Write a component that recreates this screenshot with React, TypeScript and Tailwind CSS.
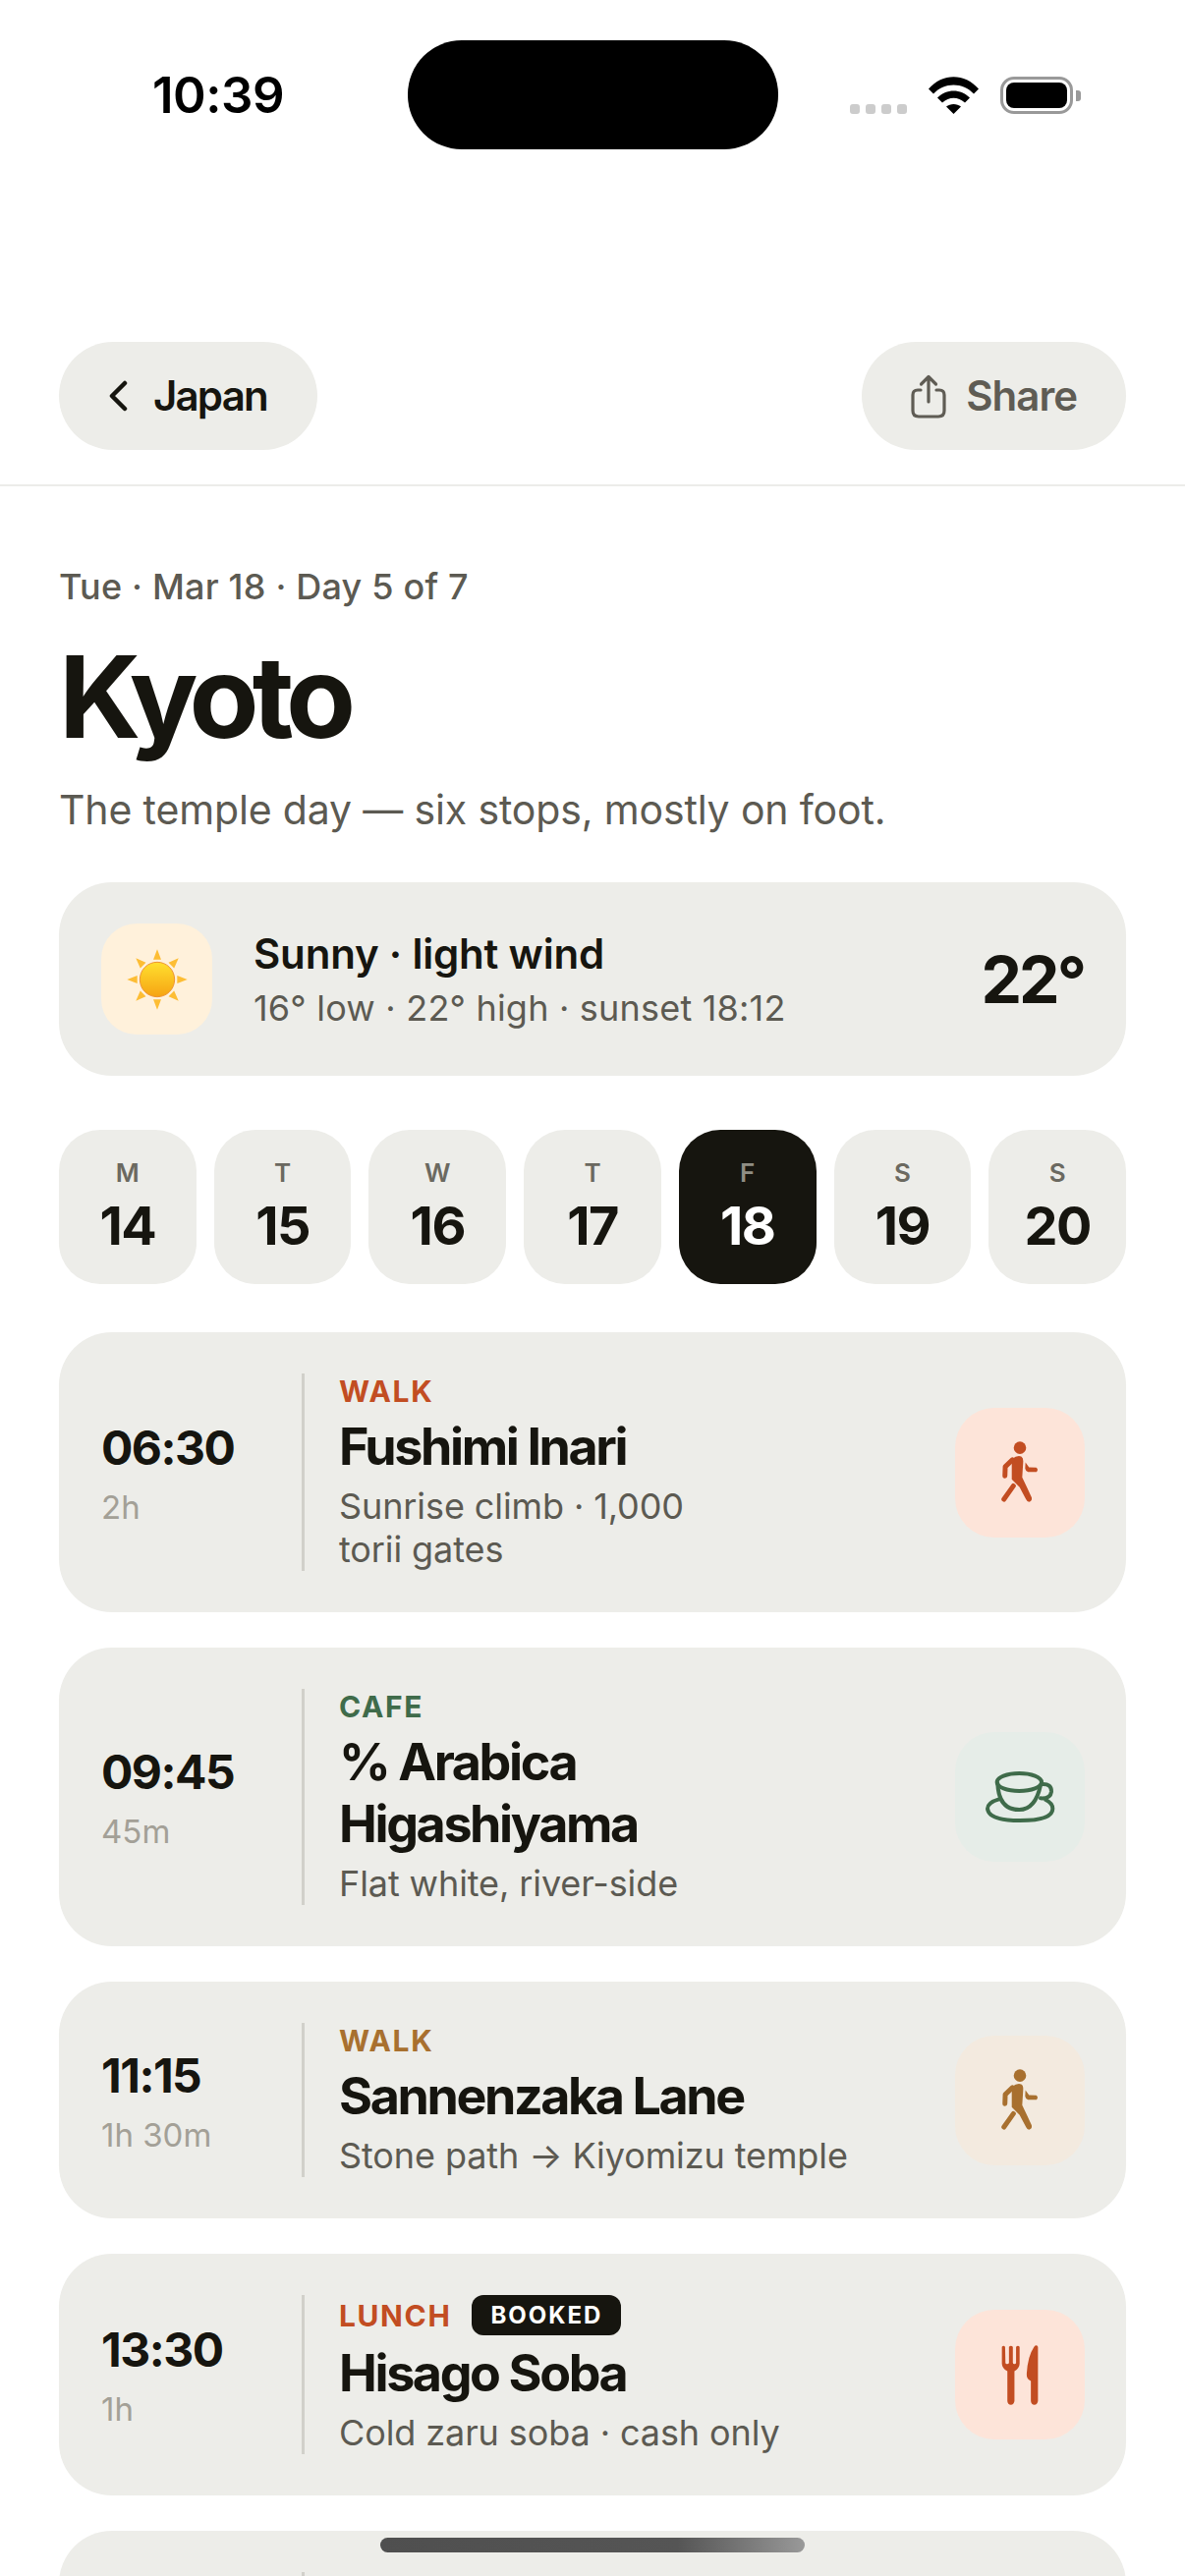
import React from "react";

const WalkIcon = ({ color }: { color: string }) => (
  <svg width="42" height="65" viewBox="230 198 126 196" fill="none">
    <circle cx="293" cy="221" r="19" fill={color} />
    <path d="M268 256Q285 243 297 248Q304 252 303 265L300 312Q316 345 329 374Q331 385 321 387Q315 387 312 380L292 342L268 318Z" fill={color} />
    <path d="M247 307L248 279L270 258" stroke={color} strokeWidth="15" strokeLinecap="round" strokeLinejoin="round" />
    <path d="M273 338L244 379" stroke={color} strokeWidth="15" strokeLinecap="round" />
    <path d="M310 266L321 281L343 282Q351 288 344 295L318 295Q310 293 309 285Z" fill={color} />
  </svg>
);

const CupIcon = ({ color }: { color: string }) => (
  <svg width="72" height="54" viewBox="185 1205 216 162" fill="none" stroke={color} strokeWidth="12" strokeLinecap="round">
    <ellipse cx="291" cy="1241" rx="68" ry="27" />
    <path d="M225 1245Q228 1325 291 1325Q340 1325 356 1250" />
    <path d="M360 1247Q390 1245 389 1270Q386 1292 356 1290" />
    <path d="M229 1293Q194 1303 194 1322Q198 1358 293 1358Q393 1358 393 1322Q393 1305 372 1295" />
  </svg>
);

const ForkKnifeIcon = ({ color }: { color: string }) => (
  <svg width="38" height="63" viewBox="236 1040 116 188" fill={color}>
    <path d="M238 1046Q243 1040 248 1046L249 1095Q249 1100 254 1100Q260 1100 260 1095L260 1046Q266 1040 272 1046L272 1095Q272 1100 277 1100Q282 1100 282 1095L282 1046Q288 1040 293 1046L293 1098Q293 1112 277 1122L277 1215Q275 1226 266 1226Q256 1226 255 1215L255 1122Q238 1112 238 1098Z" />
    <path d="M350 1046L350 1215Q348 1226 339 1226Q329 1226 328 1215L328 1152Q314 1146 315 1130Q318 1075 338 1046Q345 1038 350 1046Z" />
  </svg>
);

const ShareIcon = () => (
  <svg width="36" height="45" viewBox="0 0 36 45" fill="none" stroke="#5f5c54" strokeWidth="3.2" strokeLinecap="round" strokeLinejoin="round">
    <path d="M10 16H7Q2 16 2 21V37Q2 43 8 43H28Q34 43 34 37V21Q34 16 29 16H26" />
    <path d="M18 28V3M10.5 10L18 2.500L25.500 10" />
  </svg>
);

const SunIcon = () => {
  const angles = [0, 45, 90, 135, 180, 225, 270, 315];
  return (
    <svg width="62" height="62" viewBox="0 0 186 186">
      <defs>
        <linearGradient id="sunBody" x1="0" y1="0" x2="0" y2="1">
          <stop offset="0" stopColor="#ffe02f" />
          <stop offset="1" stopColor="#f6a313" />
        </linearGradient>
      </defs>
      {angles.map((a) => (
        <path key={a} d="M93 1L105 32H81Z" fill="#fdbd34" transform={`rotate(${a} 93 93)`} />
      ))}
      <circle cx="93" cy="93" r="53" fill="url(#sunBody)" stroke="#ee9433" strokeWidth="3" />
    </svg>
  );
};

const WifiIcon = () => (
  <svg width="51" height="38" viewBox="0 0 51 38" fill="#000">
    <path d="M0 12.500C14 -4 37 -4 51 12.500L46 17.500C35 5.500 16 5.500 5 17.500Z" />
    <path d="M9 21.500C18 12 33 12 42 21.500L37 26.500C30 20 21 20 14 26.500Z" />
    <path d="M18 30.500C22 27 29 27 33 30.500L25.500 38Z" />
  </svg>
);

const days = [
  { l: "M", n: "14" },
  { l: "T", n: "15" },
  { l: "W", n: "16" },
  { l: "T", n: "17" },
  { l: "F", n: "18", active: true },
  { l: "S", n: "19" },
  { l: "S", n: "20" },
];

type Stop = {
  time: string;
  dur: string;
  cat: string;
  catCls: string;
  tileCls: string;
  title: string;
  sub: string;
  icon: React.ReactNode;
  booked?: boolean;
};

const stops: Stop[] = [
  { time: "06:30", dur: "2h", cat: "WALK", catCls: "text-[#c24d22]", tileCls: "bg-[#fde4d9]", title: "Fushimi Inari", sub: "Sunrise climb · 1,000\ntorii gates", icon: <WalkIcon color="#c24d22" /> },
  { time: "09:45", dur: "45m", cat: "CAFE", catCls: "text-[#3f6b4a]", tileCls: "bg-[#e6ede8]", title: "% Arabica Higashiyama", sub: "Flat white, river-side", icon: <CupIcon color="#3f6b4a" /> },
  { time: "11:15", dur: "1h 30m", cat: "WALK", catCls: "text-[#a8702f]", tileCls: "bg-[#f3eadf]", title: "Sannenzaka Lane", sub: "Stone path → Kiyomizu temple", icon: <WalkIcon color="#a8702f" /> },
  { time: "13:30", dur: "1h", cat: "LUNCH", catCls: "text-[#c24d22]", tileCls: "bg-[#fde4d9]", title: "Hisago Soba", sub: "Cold zaru soba · cash only", icon: <ForkKnifeIcon color="#c24d22" />, booked: true },
];

const App = () => {
  return (
    <div className="relative h-[2622px] w-[1206px] overflow-hidden bg-white font-['Inter',sans-serif] text-[#16150f]">
      {/* status bar */}
      <div className="flex h-[152px] items-start pt-[41px]">
        <div className="w-[415px] pl-[155px] pt-[32px] text-[51px] font-semibold leading-[48px] tracking-[-0.5px] text-black">10:39</div>
        <div className="h-[111px] w-[377px] rounded-[55px] bg-black"></div>
        <div className="flex flex-1 items-end pl-[73px] pt-[37px]">
          <div className="flex gap-[6px] pb-0">
            <div className="h-[10px] w-[10px] rounded-[3px] bg-[#cccccc]"></div>
            <div className="h-[10px] w-[10px] rounded-[3px] bg-[#cccccc]"></div>
            <div className="h-[10px] w-[10px] rounded-[3px] bg-[#cccccc]"></div>
            <div className="h-[10px] w-[10px] rounded-[3px] bg-[#cccccc]"></div>
          </div>
          <div className="ml-[22px] flex">
            <WifiIcon />
          </div>
          <div className="ml-[22px] flex h-[38px] w-[74px] rounded-[14px] border-[3px] border-[#999999] p-[3px]">
            <div className="flex-1 rounded-[8px] bg-black"></div>
          </div>
          <div className="mb-[13px] ml-[3px] h-[11px] w-[5px] rounded-r-[3px] bg-[#999999]"></div>
        </div>
      </div>

      {/* nav */}
      <div className="mt-[196px] flex items-center justify-between border-b-2 border-[#ecece9] px-[60px] pb-[35px]">
        <div className="flex h-[110px] items-center rounded-[55px] bg-[#edede9] pl-[50px] pr-[51px]">
          <svg width="20" height="32" viewBox="0 0 20 32" fill="none" stroke="#16150f" strokeWidth="4.500" strokeLinecap="round" strokeLinejoin="round">
            <path d="M17 3L4 16L17 29" />
          </svg>
          <span className="ml-[26px] text-[42px] font-semibold leading-[50px] tracking-[-1.8px]">Japan</span>
        </div>
        <div className="flex h-[110px] items-center rounded-[55px] bg-[#edede9] px-[50px]">
          <ShareIcon />
          <span className="ml-[20px] text-[42px] font-semibold leading-[50px] tracking-[-1px] text-[#5f5c54]">Share</span>
        </div>
      </div>

      <div className="px-[60px] pt-[80px]">
        <div className="text-[36px] font-medium leading-[44px] tracking-[0.2px] text-[#5c5a52]">Tue · Mar 18 · Day 5 of 7</div>
        <h1 className="mt-[26px] text-[116px] font-bold leading-[128px] tracking-[-7px]">Kyoto</h1>
        <div className="mt-[26px] text-[41px] leading-[50px] tracking-[-0.15px] text-[#5c5a52]">The temple day — six stops, mostly on foot.</div>

        {/* weather */}
        <div className="mt-[49px] flex h-[197px] items-center rounded-[54px] bg-[#edede9] pl-[43px] pr-[43px]">
          <div className="flex h-[113px] w-[113px] items-center justify-center rounded-[36px] bg-[#fff1db]">
            <SunIcon />
          </div>
          <div className="ml-[42px] flex-1">
            <div className="mb-[8px] text-[42px] font-semibold leading-[50px] tracking-[-0.2px]">Sunny · light wind</div>
            <div className="text-[36px] leading-[44px] tracking-[0.2px] text-[#5c5a52]">16° low · 22° high · sunset 18:12</div>
          </div>
          <div className="text-[66px] font-bold leading-[76px] tracking-[-3px]">22°</div>
        </div>

        {/* days */}
        <div className="mt-[55px] flex gap-[18px]">
          {days.map((d) => (
            <div key={d.n} className={`flex h-[157px] flex-1 flex-col items-center rounded-[42px] pt-[27px] ${d.active ? "bg-[#16150f] text-white" : "bg-[#edede9]"}`}>
              <div className={`text-[26px] font-semibold leading-[34px] ${d.active ? "text-[#8f8d84]" : "text-[#6b6960]"}`}>{d.l}</div>
              <div className="mt-[5px] text-[54px] font-bold leading-[64px] tracking-[-1.5px]">{d.n}</div>
            </div>
          ))}
        </div>

        {/* stops */}
        <div className="mt-[49px] flex flex-col gap-[36px]">
          {stops.map((s) => (
            <div key={s.time} className="flex items-stretch rounded-[54px] bg-[#edede9] py-[42px] pl-[43px] pr-[42px]">
              <div className="flex w-[204px] shrink-0 flex-col justify-center">
                <div className="text-[48px] font-bold leading-[60px] tracking-[-1.5px] [font-kerning:none]">{s.time}</div>
                <div className="mt-[10px] text-[33px] leading-[40px] text-[#a3a097]">{s.dur}</div>
              </div>
              <div className="w-[3px] shrink-0 bg-[#d1d0ca]"></div>
              <div className="ml-[35px] min-w-0 max-w-[520px] flex-1">
                <div className="flex items-center">
                  <span className={`text-[30px] font-bold leading-[36px] tracking-[1.6px] ${s.catCls}`}>{s.cat}</span>
                  {s.booked && (
                    <span className="ml-[21px] rounded-[12px] bg-[#16150f] px-[19px] py-[5px] text-[24px] font-bold leading-[31px] tracking-[2px] text-white">BOOKED</span>
                  )}
                </div>
                <div className="mt-[7px] text-[52px] font-bold leading-[63px] tracking-[-2.4px]">{s.title}</div>
                <div className="mt-[7px] whitespace-pre-line text-[36px] leading-[44px] tracking-[-0.1px] text-[#5c5a52]">{s.sub}</div>
              </div>
              <div className="ml-auto flex items-center">
                <div className={`flex h-[132px] w-[132px] items-center justify-center rounded-[40px] ${s.tileCls}`}>{s.icon}</div>
              </div>
            </div>
          ))}
          <div className="flex h-[200px] rounded-[54px] bg-[#edede9] pl-[247px] pt-[42px]">
            <div className="h-full w-[3px] bg-[#d1d0ca]"></div>
          </div>
        </div>
      </div>

      {/* home indicator */}
      <div className="absolute left-[387px] top-[2583px] h-[15px] w-[432px] rounded-[8px] bg-gradient-to-r from-[#4f4f4f] via-[#555555] via-70% to-[#999999]"></div>
    </div>
  );
};

export default App;
